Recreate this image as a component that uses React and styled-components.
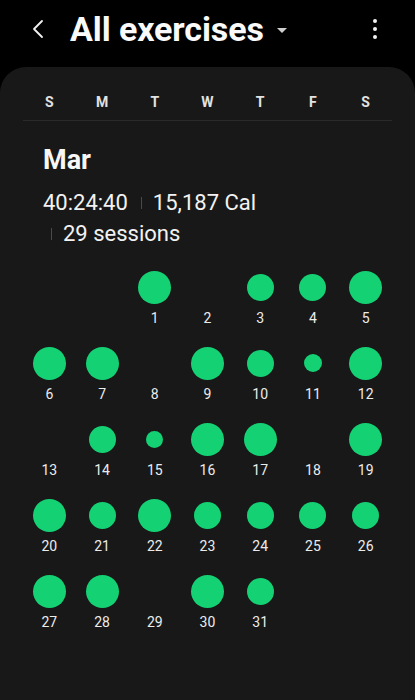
import React from 'react';
import styled, { createGlobalStyle } from 'styled-components';

const GlobalStyle = createGlobalStyle`
    html, body {
        margin: 0;
        padding: 0;
        background: #000;
    }
    body {
        font-family: Roboto, "Noto Sans", "Liberation Sans", sans-serif;
        color: #f4f4f4;
    }
`;

const Page = styled.div`
    width: 100%;
    min-height: 700px;
    display: flex;
    flex-direction: column;
    background: #000;
`;

const Header = styled.header`
    height: 58px;
    padding: 0 0 9px 0;
    display: flex;
    align-items: center;
`;

const BackButton = styled.button`
    width: 44px;
    height: 44px;
    margin-left: 16px;
    margin-right: 10px;
    padding: 0;
    border: none;
    background: none;
    display: flex;
    align-items: center;
    justify-content: center;
    cursor: pointer;
`;

const Title = styled.h1`
    margin: 0;
    font-size: 34px;
    font-weight: 700;
    letter-spacing: -0.1px;
    color: #fafafa;
    display: flex;
    align-items: center;
`;

const Caret = styled.span`
    width: 0;
    height: 0;
    margin-left: 13px;
    margin-top: 2px;
    border-left: 5.5px solid transparent;
    border-right: 5.5px solid transparent;
    border-top: 5px solid #cfcfcf;
`;

const MenuButton = styled.button`
    margin-left: auto;
    margin-right: 20px;
    width: 40px;
    height: 40px;
    padding: 0;
    border: none;
    background: none;
    display: flex;
    flex-direction: column;
    align-items: center;
    justify-content: center;
    gap: 4px;
`;

const Dot = styled.span`
    width: 4px;
    height: 4px;
    border-radius: 50%;
    background: #f2f2f2;
`;

const Card = styled.main`
    flex: 1;
    background: #181818;
    border-radius: 26px 26px 0 0;
    display: flex;
    flex-direction: column;
`;

const WeekRow = styled.div`
    margin: 0 23px;
    padding: 24px 0 7px;
    display: grid;
    grid-template-columns: repeat(7, 1fr);
    border-bottom: 1px solid #2b2b2b;
`;

const WeekDay = styled.span`
    text-align: center;
    font-size: 14px;
    line-height: 22px;
    font-weight: 700;
    color: #e2e2e2;
`;

const Summary = styled.section`
    padding: 23px 43px 0;
`;

const Month = styled.h2`
    margin: 0;
    font-size: 27px;
    line-height: 32px;
    font-weight: 700;
    color: #f7f7f7;
`;

const Stats = styled.div`
    margin-top: 11px;
    display: flex;
    flex-wrap: wrap;
    column-gap: 5px;
`;

const Stat = styled.span`
    display: inline-flex;
    align-items: center;
    font-size: 22px;
    line-height: 31px;
    color: #f2f2f2;

    ${({ $sep }) => $sep && `
        &::before {
            content: '';
            width: 1px;
            height: 12px;
            margin: 0 11px 0 8px;
            background: #4a4a4a;
        }
    `}
`;

const MonthGrid = styled.div`
    margin: 20px 23px 0;
    display: grid;
    grid-template-columns: repeat(7, 1fr);
    row-gap: 16px;
`;

const DayCell = styled.div`
    height: 60px;
    display: flex;
    flex-direction: column;
    align-items: center;
`;

const BubbleBox = styled.div`
    height: 36px;
    width: 100%;
    display: flex;
    align-items: center;
    justify-content: center;
`;

const Bubble = styled.span`
    width: ${({ $size }) => $size}px;
    height: ${({ $size }) => $size}px;
    border-radius: 50%;
    background: #14d274;
`;

const DayNumber = styled.span`
    margin-top: 3px;
    font-size: 14px;
    line-height: 20px;
    color: #ececec;
`;

const WEEK = ['S', 'M', 'T', 'W', 'T', 'F', 'S'];

// bubble size per day of March, 0 = no workout
const SIZES = [
    33, 0, 27, 27, 33,
    33, 33, 0, 33, 27, 18, 33,
    0, 27, 17, 33, 33, 0, 33,
    33, 27, 33, 27, 27, 27, 27,
    33, 33, 0, 33, 27,
];

const FIRST_WEEKDAY = 2;

export default function App() {
    return (
        <Page>
            <GlobalStyle />
            <Header>
                <BackButton aria-label="Back">
                    <svg width="14" height="20" viewBox="0 0 14 20" fill="none">
                        <path d="M11 2 L3 10 L11 18" stroke="#f2f2f2" strokeWidth="1.8" strokeLinecap="round" strokeLinejoin="round" />
                    </svg>
                </BackButton>
                <Title>
                    All exercises
                    <Caret />
                </Title>
                <MenuButton aria-label="More">
                    <Dot />
                    <Dot />
                    <Dot />
                </MenuButton>
            </Header>
            <Card>
                <WeekRow>
                    {WEEK.map((d, i) => (
                        <WeekDay key={i}>{d}</WeekDay>
                    ))}
                </WeekRow>
                <Summary>
                    <Month>Mar</Month>
                    <Stats>
                        <Stat>40:24:40</Stat>
                        <Stat $sep>15,187 Cal</Stat>
                        <Stat $sep>29 sessions</Stat>
                    </Stats>
                </Summary>
                <MonthGrid>
                    {Array.from({ length: FIRST_WEEKDAY }).map((_, i) => (
                        <DayCell key={'e' + i} />
                    ))}
                    {SIZES.map((size, i) => (
                        <DayCell key={i}>
                            <BubbleBox>{size > 0 && <Bubble $size={size} />}</BubbleBox>
                            <DayNumber>{i + 1}</DayNumber>
                        </DayCell>
                    ))}
                </MonthGrid>
            </Card>
        </Page>
    );
}
